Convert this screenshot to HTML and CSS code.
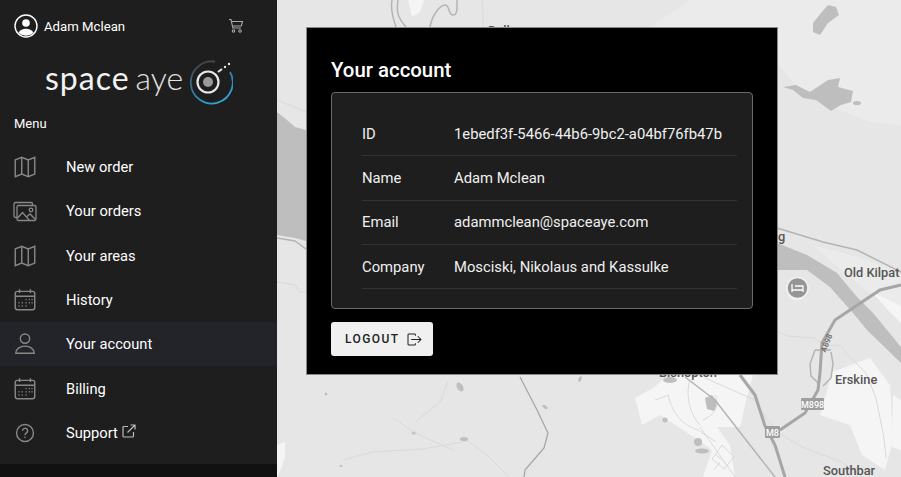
FILE: index.html
```html
<!DOCTYPE html>
<html lang="en">
<head>
    <meta charset="UTF-8">
    <meta name="viewport" content="width=device-width, initial-scale=1.0">
    <title>Your account - Space Aye</title>
    <link rel="stylesheet" href="styles.css">
</head>
<body>
    <aside class="sidebar">
        <div class="user-bar">
            <div class="user">
                <svg class="avatar" viewBox="0 0 24 24"><circle cx="12" cy="12" r="11" fill="none" stroke="#fff" stroke-width="1.4"/><circle cx="12" cy="9" r="3.8" fill="#fff"/><path d="M4.500 18.800c1.600-3 4.400-4 7.500-4s5.900 1 7.500 4a11 11 0 0 1-15 0z" fill="#fff"/></svg>
                <span>Adam Mclean</span>
            </div>
            <svg class="cart" viewBox="0 0 16 16" fill="none" stroke="#aaa" stroke-width="1.100"><path d="M1 1.500h2l1.800 8.500h8"/><path d="M3.500 3.500h11l-1.200 4.500H4.400"/><circle cx="5.500" cy="13" r="1.200"/><circle cx="12" cy="13" r="1.200"/></svg>
        </div>

        <div class="logo">
            <span class="logo-space">space</span>
            <span class="logo-aye">aye</span>
            <svg class="logo-mark" viewBox="0 0 46 46" fill="none">
                <defs><linearGradient id="ring" x1="0.3" y1="0" x2="0.8" y2="1"><stop offset="0" stop-color="#444"/><stop offset="0.55" stop-color="#2a86b4"/><stop offset="1" stop-color="#35a8dc"/></linearGradient></defs>
                <path d="M28 2.700A21 21 0 1 0 43 13" stroke="url(#ring)" stroke-width="1.800"/>
                <circle cx="21" cy="23" r="10.500" stroke="#e8e8e8" stroke-width="2.200"/>
                <circle cx="21" cy="23" r="5" fill="#9a9a9a"/>
                <path d="M31 13l4-3" stroke="#e8e8e8" stroke-width="2"/>
                <circle cx="38" cy="8" r="1.200" fill="#e8e8e8"/>
                <circle cx="42" cy="5" r="1.200" fill="#e8e8e8"/>
            </svg>
        </div>

        <div class="menu-title">Menu</div>

        <nav class="menu">
            <a href="#" class="menu-item">
                <svg class="menu-icon" viewBox="0 0 24 24"><path d="M3 5.500l6-2.500 6 2.500 6-2.500v15.500l-6 2.500-6-2.500-6 2.500z"/><path d="M9 3v15.500M15 5.500V21"/></svg>
                New order
            </a>
            <a href="#" class="menu-item">
                <svg class="menu-icon" viewBox="-1 -1 26 26"><path d="M4 18.500H2.500a1.500 1.500 0 0 1-1.500-1.500V5a1.500 1.500 0 0 1 1.500-1.500H18A1.500 1.500 0 0 1 19.500 5v1.500"/><rect x="4" y="6.500" width="19" height="15" rx="1.500"/><circle cx="18" cy="11" r="1.800"/><path d="M4.500 19l5-5.500 7 8M14 17.500l3-2.500 5.500 5.500"/></svg>
                Your orders
            </a>
            <a href="#" class="menu-item">
                <svg class="menu-icon" viewBox="0 0 24 24"><path d="M3 5.500l6-2.500 6 2.500 6-2.500v15.500l-6 2.500-6-2.500-6 2.500z"/><path d="M9 3v15.500M15 5.500V21"/></svg>
                Your areas
            </a>
            <a href="#" class="menu-item">
                <svg class="menu-icon" viewBox="0 0 24 24"><rect x="3" y="4" width="18" height="17" rx="2"/><path d="M3 8.500h18M7 2v3.500M17 2v3.500"/><path class="dots" d="M12.500 11.500h1M15.500 11.500h1M18 11.500h1M6 14.500h1M9 14.500h1M12.500 14.500h1M15.500 14.500h1M18 14.500h1M6 17.500h1M9 17.500h1M12.500 17.500h1"/></svg>
                History
            </a>
            <a href="#" class="menu-item active">
                <svg class="menu-icon" viewBox="0 0 24 24"><circle cx="12" cy="7" r="4.300"/><path d="M3.500 20.500c0-4 3.800-6.500 8.500-6.500s8.500 2.500 8.500 6.500z"/></svg>
                Your account
            </a>
            <a href="#" class="menu-item">
                <svg class="menu-icon" viewBox="0 0 24 24"><rect x="3" y="4" width="18" height="17" rx="2"/><path d="M3 8.500h18M7 2v3.500M17 2v3.500"/><path class="dots" d="M12.500 11.500h1M15.500 11.500h1M18 11.500h1M6 14.500h1M9 14.500h1M12.500 14.500h1M15.500 14.500h1M18 14.500h1M6 17.500h1M9 17.500h1M12.500 17.500h1"/></svg>
                Billing
            </a>
            <a href="#" class="menu-item">
                <svg class="menu-icon" viewBox="0 0 24 24"><circle cx="12" cy="12" r="7.800"/><path d="M9.800 10a2.300 2.300 0 1 1 3.500 1.900c-.9.600-1.300 1-1.300 2.100"/><path d="M12 15.500v1.200"/></svg>
                <span>Support</span>
                <svg class="external" viewBox="0 0 14 14"><path d="M6 2.500H2a1 1 0 0 0-1 1V12a1 1 0 0 0 1 1h8.500a1 1 0 0 0 1-1V8"/><path d="M5.500 8.500L13 1M8.500 1H13v4.500"/></svg>
            </a>
        </nav>

        <div class="sidebar-foot"></div>
    </aside>

    <main class="map-area">
        <svg class="map" viewBox="277 0 624 477">
            <path class="land-soft" d="M650 27L690 0H901V125L870 122 840 110 800 90 778 65V27z"/>
            <path class="land-soft" d="M813 245l47 13 41 14v48l-16-15-25-20-25-20z"/>
            <g class="land-light">
                <path d="M635 398l18-10 15-13h85l-6 22-7 30h-23l13 18 5 32h-32l9-27-17-12-12-8-23-15-18 10z"/>
                <path d="M832 372l38-14 20 27 3 55-8 30-23-15-12-30-30-10 6-20z"/>
                <path d="M893 395l8 5v50l-9-3z"/>
                <path d="M872 292l29 14v17l-14-14z"/>
                <path d="M277 445l8-3v15l-4 12-4 8z"/>
                <path d="M408 0h16l-4 12-8 5z"/>
            </g>
            <g class="water">
                <path d="M828 5l8 2 3 8-11 8-8 12-7-3v-9l8-10z"/>
                <path d="M783 87l13-2 14 7 18-12 12-2-2 9 15 4-2 11-10 3-10 6-15-11-13-2-10-8z"/>
                <ellipse cx="857" cy="103" rx="4" ry="2"/>
                <path d="M277 112l10 8 8 7 11 3V241l-11-3-18-3z"/>
                <path d="M777 243l30 12 30 18 20 24 16 16 28 34v16l-34-33-14-17-23-26-23-17h-30z"/>
                <ellipse cx="460" cy="387" rx="3" ry="5" transform="rotate(-30 460 387)"/>
                <ellipse cx="464" cy="439" rx="4" ry="2"/>
                <ellipse cx="414" cy="433" rx="2.500" ry="1.500"/>
                <ellipse cx="326" cy="394" rx="1.500" ry="1.500"/>
                <ellipse cx="341" cy="466" rx="1.500" ry="1"/>
                <ellipse cx="665" cy="420" rx="2.500" ry="2.500"/>
                <ellipse cx="545" cy="407" rx="3" ry="1.500" transform="rotate(35 545 407)"/>
                <ellipse cx="580" cy="379" rx="1.500" ry="3" transform="rotate(25 580 379)"/>
                <ellipse cx="698" cy="442" rx="4" ry="4"/>
                <ellipse cx="702" cy="451" rx="7" ry="2.500"/>
                <ellipse cx="670" cy="380" rx="7" ry="3"/>
                <path d="M705 398l7-3 6 8-4 8-7-2z"/>
            </g>
            <g class="road-thin">
                <path d="M277 100l29 12M277 282l18 3 5 7h6"/>
                <path d="M343 460l30-8 50-3 45-8 20 15 20 20M393 418l22 15 40 18M415 422l25-20 8-20"/>
                <path d="M655 400l14-5M668 395c5 20 15 30 30 35l18 12M690 380c-5 15 0 35 10 45M715 395c5 10 0 20-12 25M700 427l35 50"/>
                <path d="M722 445l12 12-10 12-12-10zM716 455l10 8M720 462l-6 8"/>
                <path d="M778 332l10 4 26 2 12 8 14-1 6 8 20 20 10 25 8 40 2 20"/>
                <path d="M705 378l50 22 12 20 15 15 20 12 40 15 20 15"/>
                <path d="M482 0c2 10 0 22 2 30"/>
            </g>
            <g class="road-mid">
                <path d="M277 238l18 3 11 8"/>
                <path d="M777 228l46 14 34 8 44 22"/>
                <path d="M392 0c-2 12 2 20 4 27M398 0c-2 12 0 18 8 27"/>
                <path d="M430 27c2-12 10-22 15-22s3 10 8 10 4-8 4-15"/>
                <path d="M685 377l30 23 35 45 25 32"/>
                <path d="M815 350l-5 14 1 12 8 8M831 352l2 12-2 14-8 8M815 350h16"/>
            </g>
            <g class="road">
                <path d="M520 377l17 33 11 23-4 15-19 22-1 7"/>
                <path class="road-wide" d="M740 375l15 20 10 31 10 19 10 32"/>
                <path class="road-wide" d="M901 285l-21 5-45 30-13 23-2 30-2 17-13 23-25 17"/>
            </g>
            <g class="shield">
                <rect x="801" y="398" width="23" height="12" rx="1"/>
                <rect x="765" y="426" width="15" height="12" rx="1"/>
            </g>
            <text class="shield-label" x="812.500" y="407.500">M898</text>
            <text class="shield-label" x="772.500" y="435.500">M8</text>
            <text class="shield-label small" transform="translate(829 344) rotate(-68)">A898</text>
            <path class="pin-tip" d="M788 295q9 11 18 0z"/>
            <circle class="pin" cx="797.500" cy="288" r="10.500"/>
            <path class="pin-bed" d="M792 284v8M792 290h11v2M795 286h8v4"/>
            <text class="map-label" x="844" y="277">Old Kilpat</text>
            <text class="map-label" x="835" y="384">Erskine</text>
            <text class="map-label" x="823" y="475">Southbar</text>
            <text class="map-label" x="778" y="241">g</text>
            <text class="map-label" x="659" y="377">Bishopton</text>
            <text class="map-label" x="488" y="35">Bull</text>
        </svg>

        <section class="card">
            <h2 class="card-title">Your account</h2>
            <div class="details-box">
                <div class="detail-row"><label>ID</label><span>1ebedf3f-5466-44b6-9bc2-a04bf76fb47b</span></div>
                <div class="detail-row"><label>Name</label><span>Adam Mclean</span></div>
                <div class="detail-row"><label>Email</label><span>adammclean@spaceaye.com</span></div>
                <div class="detail-row"><label>Company</label><span>Mosciski, Nikolaus and Kassulke</span></div>
            </div>
            <a href="#" class="logout-btn">
                LOGOUT
                <svg class="logout-icon" viewBox="0 0 16 14"><path d="M9 3V2a1 1 0 0 0-1-1H2a1 1 0 0 0-1 1v10a1 1 0 0 0 1 1h6a1 1 0 0 0 1-1v-1"/><path d="M4.500 7H15M11.500 3.500L15 7l-3.500 3.500"/></svg>
            </a>
        </section>
    </main>
</body>
</html>
```

FILE: styles.css
```css
html, body {
    height: 100%;
}

body {
    display: flex;
    margin: 0;
    overflow: hidden;
    font-family: 'Roboto', sans-serif;
    color: #fff;
    background: #1e1e1e;
}

.sidebar {
    display: flex;
    flex-direction: column;
    flex: none;
    width: 277px;
    height: 477px;
    background: #1e1e1e;
}

.user-bar {
    display: flex;
    justify-content: space-between;
    align-items: center;
    height: 52px;
    padding: 0 33px 0 14px;
}

.user {
    display: flex;
    align-items: center;
    gap: 6px;
    font-size: 13.200px;
}

.avatar {
    width: 24px;
    height: 24px;
}

.cart {
    width: 16px;
    height: 16px;
}

/* Logo */
.logo {
    display: flex;
    align-items: center;
    height: 60px;
    padding-left: 45px;
}

.logo-space, .logo-aye {
    margin-bottom: 9px;
    font-family: 'Lato', sans-serif;
    font-size: 32px;
    line-height: 1;
    color: #f2f2f2;
}

.logo-space {
    letter-spacing: 1px;
}

.logo-aye {
    margin-left: 6px;
    font-weight: 300;
    color: #e2e2e2;
}

.logo-mark {
    flex: none;
    width: 46px;
    height: 46px;
    margin-left: 4px;
}

.menu-title {
    padding: 0 14px;
    margin: 4px 0 13px;
    font-size: 13px;
    line-height: 16px;
}

.menu {
    display: flex;
    flex-direction: column;
}

.menu-item {
    display: flex;
    align-items: center;
    height: 44.300px;
    padding-left: 12px;
    font-size: 14.700px;
    color: #fff;
    text-decoration: none;
}

.menu-item.active {
    background: #22242a;
}

.menu-icon {
    flex: none;
    width: 26px;
    height: 26px;
    margin-right: 28px;
    fill: none;
    stroke: #888;
    stroke-width: 1.300;
}

.menu-icon .dots {
    stroke-width: 1.500;
}

.external {
    width: 14px;
    height: 14px;
    margin: -4px 0 0 4px;
    fill: none;
    stroke: #bbb;
    stroke-width: 1.200;
}

.sidebar-foot {
    flex: 1;
    margin-top: 9px;
    background: #111;
}

/* Map */
.map-area {
    position: relative;
    flex: 1;
    height: 477px;
    overflow: hidden;
    background: #e6e6e6;
}

.map {
    position: absolute;
    top: 0;
    left: 0;
    width: 624px;
    height: 477px;
}

.land-light {
    fill: #f5f5f5;
}

.land-soft {
    fill: #ebebeb;
}

.water {
    fill: #bebebe;
}

.road-thin {
    fill: none;
    stroke: #dadada;
    stroke-width: 1;
}

.road-mid {
    fill: none;
    stroke: #b4b4b4;
    stroke-width: 1.500;
}

.road {
    fill: none;
    stroke: #a6a6a6;
    stroke-width: 1.300;
}

.road .road-wide {
    stroke-width: 3;
}

.shield {
    fill: #9e9e9e;
}

.shield-label {
    font-size: 9px;
    font-weight: 500;
    text-anchor: middle;
    fill: #fff;
}

.shield-label.small {
    font-size: 8px;
    fill: #666;
}

.map-label {
    font-size: 12.800px;
    font-weight: 500;
    fill: #555;
}

.pin {
    fill: #959595;
    stroke: #f2f2f2;
    stroke-width: 1.500;
}

.pin-tip {
    fill: #f2f2f2;
}

.pin-bed {
    fill: none;
    stroke: #fff;
    stroke-width: 1.300;
}

/* Account card */
.card {
    position: relative;
    width: 422px;
    margin: 27px 0 0 29px;
    padding: 26px 24px 18px;
    background: #000;
    border: 1px solid #8a8a8a;
    align-self: flex-start;
}

.card-title {
    margin: 0 0 6px;
    font-size: 20.400px;
    font-weight: 500;
    line-height: 32px;
}

.details-box {
    padding: 19px 15px 19px 30px;
    background: #1e1e1e;
    border: 1px solid #6a6a6a;
    border-radius: 4px;
}

.detail-row {
    display: flex;
    align-items: center;
    height: 44.300px;
    font-size: 14.800px;
    color: #f0f0f0;
    border-bottom: 1px solid #333;
    box-sizing: border-box;
}

.detail-row label {
    flex: none;
    width: 92px;
}

.logout-btn {
    display: inline-flex;
    align-items: center;
    gap: 8px;
    height: 34px;
    margin-top: 13px;
    padding: 0 11px 0 14px;
    background: #f0f0f0;
    border-radius: 3px;
    font-size: 12px;
    font-weight: 500;
    letter-spacing: 1.400px;
    color: #222;
    text-decoration: none;
}

.logout-icon {
    width: 15px;
    height: 13px;
    fill: none;
    stroke: #222;
    stroke-width: 1.100;
}
```
